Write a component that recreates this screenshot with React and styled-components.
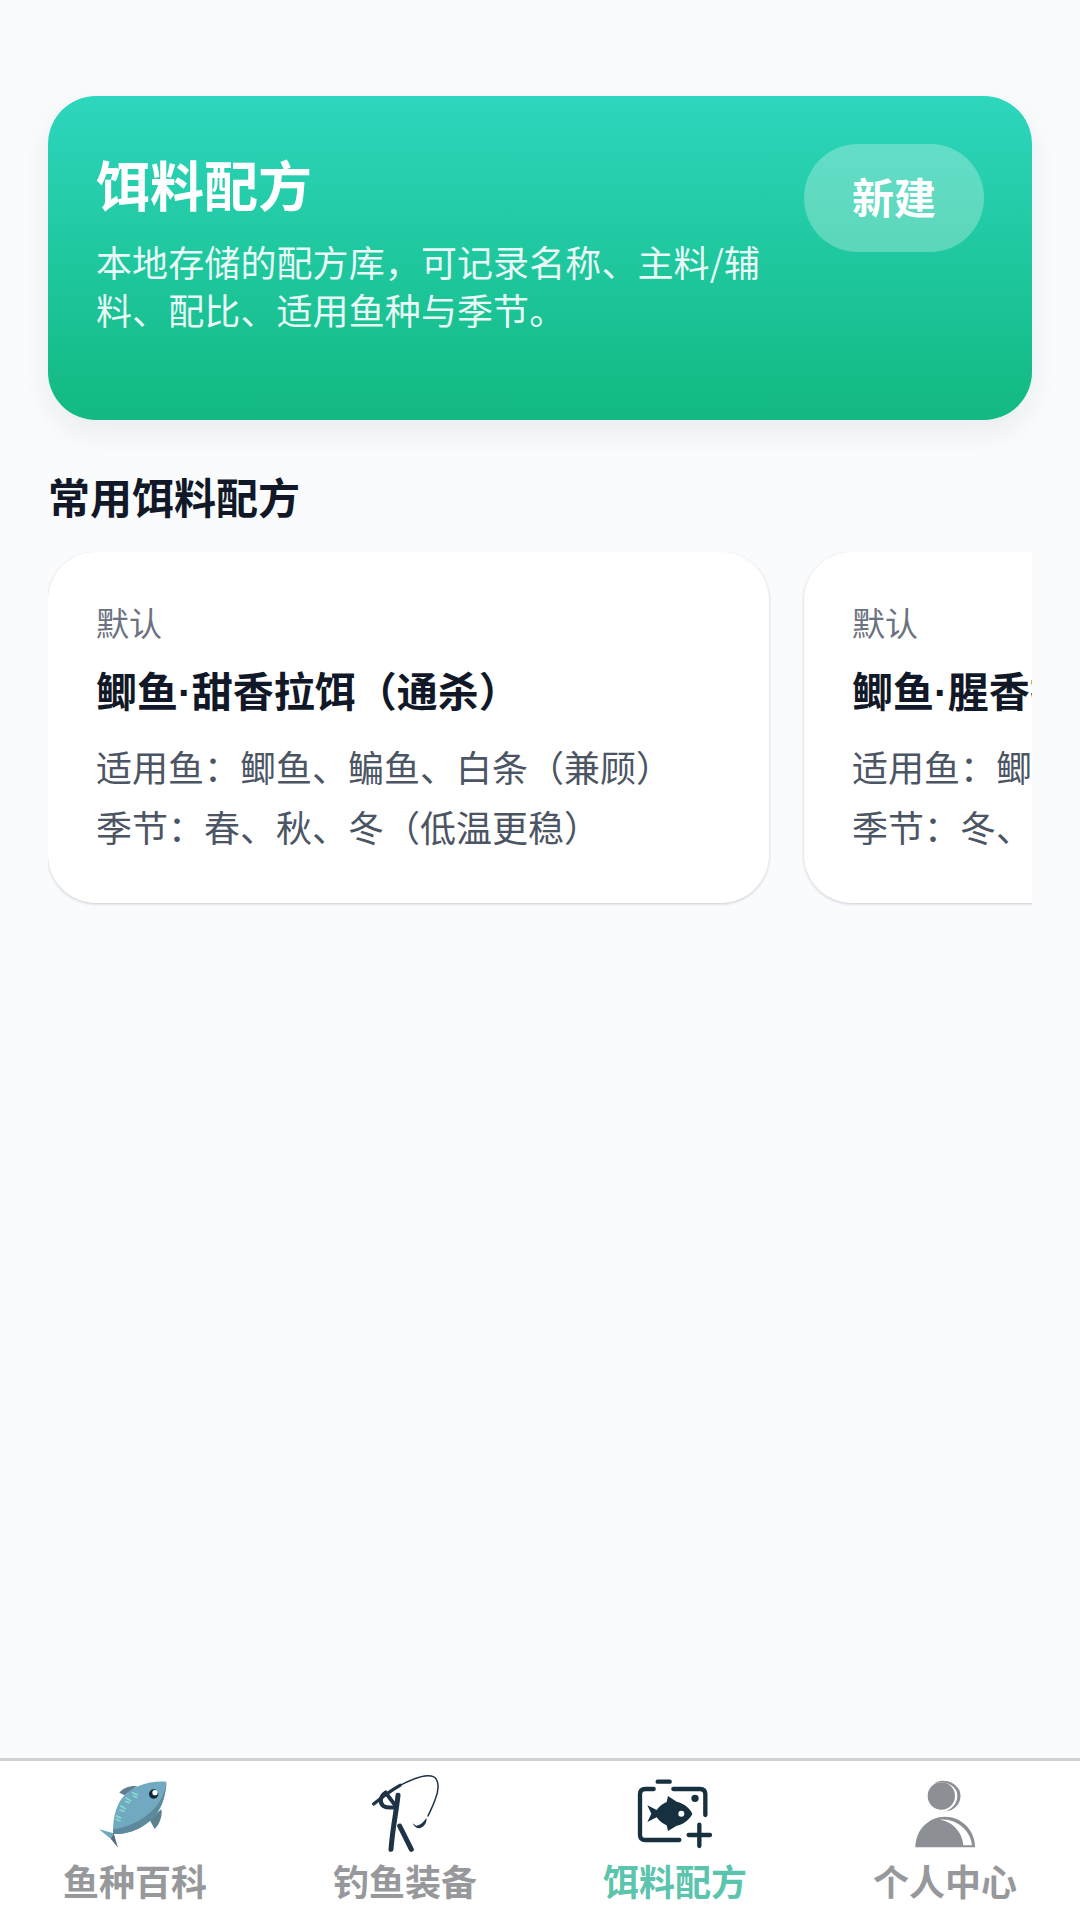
import styled, { createGlobalStyle } from 'styled-components';

const FONT = '"Noto Sans CJK SC", "Noto Sans", sans-serif';

const recipes = [
  {
    id: 1,
    tag: '默认',
    name: '鲫鱼·甜香拉饵（通杀）',
    fish: '适用鱼：鲫鱼、鳊鱼、白条（兼顾）',
    season: '季节：春、秋、冬（低温更稳）',
  },
  {
    id: 2,
    tag: '默认',
    name: '鲫鱼·腥香拉饵（冬季）',
    fish: '适用鱼：鲫鱼、鲤鱼',
    season: '季节：冬、早春',
  },
];

const FishIcon = () => (
  <TabSvg viewBox="30 30 270 270">
    <path d="M118 98C128 84 150 76 172 78L152 92L134 106Z" fill="#5f7f90" />
    <path d="M208 178L244 148C248 165 240 192 224 207Z" fill="#5b8090" />
    <path d="M57 208L101 220L92 236Z" fill="#6fa9c0" />
    <path d="M92 236L101 220L114 263Z" fill="#566f80" />
    <path d="M259 65C205 62 152 78 122 120C106 146 98 180 99 222C170 225 232 180 250 120C255 102 259 84 259 65Z" fill="#70a9c0" />
    <path d="M259 65C255 125 200 192 99 208L99 222C170 225 232 180 250 120C255 102 259 84 259 65Z" fill="#5c8a9c" />
    <g stroke="#86dccf" strokeWidth="5" strokeLinecap="round">
      <path d="M158 98L172 104M160 108L170 112" />
      <path d="M138 114L152 122M136 124L148 128" />
      <path d="M122 138L136 146M120 150L132 154" />
      <path d="M110 168L122 174M108 178L120 182" />
    </g>
    <circle cx="221" cy="102" r="14" fill="#10283a" />
    <circle cx="225" cy="98" r="8" fill="#fff" />
  </TabSvg>
);

const RodIcon = () => (
  <TabSvg viewBox="30 30 270 270">
    <g fill="none" stroke="#1e3347" strokeLinecap="round" strokeLinejoin="round">
      <path d="M71 132C95 112 125 90 150 76" strokeWidth="10" />
      <path d="M150 76C185 58 225 40 250 50C268 58 268 90 255 120C248 140 240 155 234 168" strokeWidth="4.5" />
      <path d="M144 106C140 150 128 200 123 268" strokeWidth="15" />
      <path d="M149 198L184 268" strokeWidth="15" />
      <path d="M107 98C90 108 88 130 100 138C112 146 128 142 136 142" strokeWidth="12" />
      <path d="M107 98L134 134" strokeWidth="12" />
    </g>
    <path d="M188 190L198 197C210 196 222 186 229 173C232 188 222 202 206 205C198 205 192 198 188 190Z" fill="#1e3347" />
  </TabSvg>
);

const BaitIcon = () => (
  <TabSvg viewBox="30 30 270 270">
    <g fill="none" stroke="#17303f" strokeWidth="13" strokeLinecap="round">
      <path d="M101 87H76Q60 87 60 103V224Q60 240 76 240H178" />
      <path d="M160 87H240Q256 87 256 103V165" />
      <path d="M113 65H149" />
      <path d="M238 194V258M206 225H270" />
    </g>
    <circle cx="225" cy="115" r="11" fill="#17303f" />
    <path d="M82 136L110 150C118 138 130 130 140 126L144 108L170 125C194 130 210 146 217 161C210 176 194 192 170 197L144 213L140 196C130 192 118 184 110 172L82 186L94 161Z" fill="#17303f" />
    <circle cx="184" cy="161" r="9" fill="#fff" />
  </TabSvg>
);

const PersonIcon = () => (
  <TabSvg viewBox="30 30 270 270">
    <circle cx="154" cy="108" r="41" fill="#8c8f94" />
    <path d="M130 72C150 54 192 60 208 90C220 120 200 152 164 155C190 146 206 124 201 98C195 76 160 58 130 72Z" fill="#8c8f94" />
    <path d="M76 262C76 210 116 170 165 170C214 170 255 210 255 262Z" fill="#8c8f94" />
    <path d="M150 179C198 174 243 212 246 256H220C218 220 192 186 150 179Z" fill="#fff" />
  </TabSvg>
);

const tabs = [
  { key: 'fish', label: '鱼种百科', Icon: FishIcon },
  { key: 'gear', label: '钓鱼装备', Icon: RodIcon },
  { key: 'bait', label: '饵料配方', Icon: BaitIcon, active: true },
  { key: 'me', label: '个人中心', Icon: PersonIcon },
];

const App = () => {
  return (
    <>
      <GlobalStyle />
      <Page>
        <Main>
          <Hero>
            <HeroText>
              <HeroTitle>饵料配方</HeroTitle>
              <HeroDesc>本地存储的配方库，可记录名称、主料/辅料、配比、适用鱼种与季节。</HeroDesc>
            </HeroText>
            <NewButton type="button">新建</NewButton>
          </Hero>

          <SectionTitle>常用饵料配方</SectionTitle>

          <CardScroller>
            {recipes.map((recipe) => (
              <Card key={recipe.id}>
                <CardTag>{recipe.tag}</CardTag>
                <CardName>{recipe.name}</CardName>
                <CardLine>{recipe.fish}</CardLine>
                <CardLine>{recipe.season}</CardLine>
              </Card>
            ))}
          </CardScroller>
        </Main>

        <TabBar>
          {tabs.map(({ key, label, Icon, active }) => (
            <Tab key={key}>
              <Icon />
              <TabLabel $active={active}>{label}</TabLabel>
            </Tab>
          ))}
        </TabBar>
      </Page>
    </>
  );
};

export default App;

const GlobalStyle = createGlobalStyle`
  html, body {
    margin: 0;
    padding: 0;
    background: #f9fbfd;
  }
  * {
    box-sizing: border-box;
  }
`;

const Page = styled.div`
  display: flex;
  flex-direction: column;
  width: 1080px;
  height: 1920px;
  overflow: hidden;
  font-family: ${FONT};
  background: #f9fbfd;
`;

const Main = styled.main`
  flex: 1;
  padding: 96px 48px 0;
`;

// hero
const Hero = styled.section`
  display: flex;
  align-items: flex-start;
  gap: 24px;
  height: 324px;
  padding: 48px;
  border-radius: 48px;
  background: linear-gradient(180deg, #2dd6bd 0%, #12b981 100%);
  box-shadow: 0 12px 30px rgba(30, 60, 70, 0.07);
`;

const HeroText = styled.div`
  flex: 1;
  min-width: 0;
`;

const HeroTitle = styled.h1`
  margin: 0;
  font-size: 54px;
  line-height: 80px;
  font-weight: 700;
  color: #fff;
`;

const HeroDesc = styled.p`
  margin: 13px 0 0;
  font-size: 36px;
  line-height: 48px;
  letter-spacing: 0.1px;
  color: rgba(255, 255, 255, 0.92);
`;

const NewButton = styled.button`
  flex: none;
  width: 180px;
  height: 108px;
  padding: 0 0 6px;
  border: 0;
  border-radius: 54px;
  background: rgba(255, 255, 255, 0.27);
  font-family: inherit;
  font-size: 42px;
  font-weight: 700;
  color: #fff;
`;

const SectionTitle = styled.h2`
  margin: 46px 0 0;
  font-size: 42px;
  line-height: 60px;
  font-weight: 700;
  color: #111827;
`;

// cards
const CardScroller = styled.div`
  display: flex;
  gap: 35px;
  margin-top: 26px;
  padding-bottom: 12px;
  overflow: hidden;
`;

const Card = styled.article`
  flex: none;
  width: 721px;
  height: 351px;
  padding: 48px;
  border-radius: 48px;
  background: #fff;
  box-shadow: 0 1px 3px rgba(30, 40, 60, 0.22);
`;

const CardTag = styled.div`
  font-size: 33px;
  line-height: 44px;
  color: #6b7280;
`;

// Liberation Sans first so the middle dot stays narrow
const CardName = styled.div`
  margin: 20px 0 17px;
  font-family: "Liberation Sans", ${FONT};
  font-size: 41px;
  line-height: 58px;
  font-weight: 700;
  white-space: nowrap;
  color: #111827;
`;

const CardLine = styled.div`
  margin-top: 6px;
  font-size: 36px;
  line-height: 54px;
  white-space: nowrap;
  color: #4b5563;
`;

// tab bar
const TabBar = styled.nav`
  flex: none;
  display: grid;
  grid-template-columns: repeat(4, 1fr);
  height: 162px;
  border-top: 3px solid #cfd1d6;
  background: #fff;
`;

const Tab = styled.div`
  display: flex;
  flex-direction: column;
  align-items: center;
  padding-top: 9px;
`;

const TabSvg = styled.svg`
  display: block;
  width: 90px;
  height: 90px;
`;

const TabLabel = styled.span`
  margin-top: -2px;
  font-size: 36px;
  line-height: 44px;
  font-weight: 700;
  color: ${(props) => (props.$active ? '#5bc4ac' : '#97989b')};
`;
